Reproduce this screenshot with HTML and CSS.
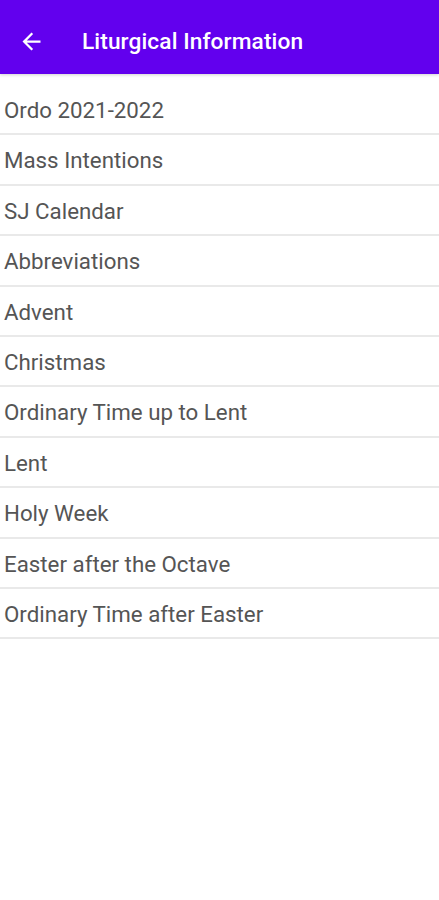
FILE: index.html
```html
<!DOCTYPE html>
<html>
<head>
<meta charset="utf-8">
<link rel="stylesheet" href="styles.css">
</head>
<body>
<header class="appbar">
  <svg class="back" viewBox="0 0 24 24" width="27" height="27"><path fill="#fff" d="M20 11H7.83l5.59-5.59L12 4l-8 8 8 8 1.41-1.41L7.83 13H20v-2z"/></svg>
  <h1 class="title">Liturgical Information</h1>
</header>
<ul class="list">
  <li class="item">Ordo 2021-2022</li>
  <li class="item">Mass Intentions</li>
  <li class="item">SJ Calendar</li>
  <li class="item">Abbreviations</li>
  <li class="item">Advent</li>
  <li class="item">Christmas</li>
  <li class="item">Ordinary Time up to Lent</li>
  <li class="item">Lent</li>
  <li class="item">Holy Week</li>
  <li class="item">Easter after the Octave</li>
  <li class="item">Ordinary Time after Easter</li>
</ul>
</body>
</html>
```
FILE: styles.css
```css
html, body {
  margin: 0;
  padding: 0;
  background: #fff;
  font-family: Roboto, "Noto Sans", sans-serif;
}
.appbar {
  height: 74px;
  box-sizing: border-box;
  padding: 8px 0 0 18px;
  background: #6200ee;
  display: flex;
  align-items: center;
  box-shadow: 0 1px 3px rgba(0,0,0,0.18);
  position: relative;
}
.back {
  display: block;
  flex: none;
}
.title {
  margin: 0 0 0 37px;
  color: #fff;
  font-size: 22.7px;
  font-weight: 500;
  letter-spacing: 0.1px;
}
.list {
  list-style: none;
  margin: 0;
  padding: 11px 0 0 0;
}
.item {
  height: 48.4px;
  line-height: 50px;
  padding-left: 4px;
  font-size: 22.3px;
  color: #555;
  border-bottom: 2px solid #e9e9e9;
}
```
